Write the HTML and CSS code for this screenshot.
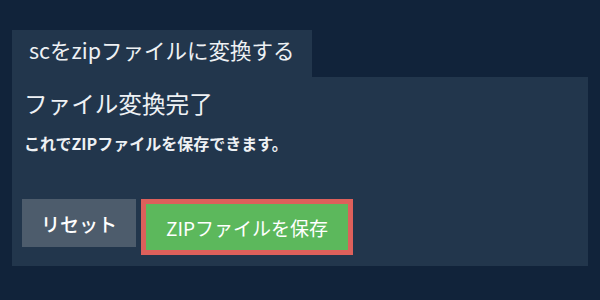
FILE: index.html
```html
<!DOCTYPE html>
<html lang="ja">
<head>
<meta charset="utf-8">
<link rel="stylesheet" href="styles.css">
</head>
<body>
<div class="wrap">
  <div class="tab">scをzipファイルに変換する</div>
  <div class="panel">
    <h2 class="title">ファイル変換完了</h2>
    <p class="msg">これでZIPファイルを保存できます。</p>
    <div class="actions">
      <button class="btn reset">リセット</button>
      <button class="btn save">ZIPファイルを保存</button>
    </div>
  </div>
</div>
</body>
</html>
```

FILE: styles.css
```css
html, body {
  margin: 0;
  padding: 0;
  background: #11233a;
  width: 600px;
  height: 300px;
  overflow: hidden;
  font-family: "Noto Sans CJK JP", "Noto Sans", sans-serif;
  color: #ffffff;
}
.wrap {
  padding: 30px 12px 0 12px;
}
.tab {
  display: inline-block;
  background: #22364c;
  height: 47px;
  line-height: 40px;
  padding: 0 18px 0 17px;
  font-size: 21.5px;
  color: #eef1f4;
  box-sizing: border-box;
}
.panel {
  background: #22364c;
  height: 189px;
  padding: 12px 10px 0 12px;
  box-sizing: border-box;
}
.title {
  margin: 0;
  font-size: 23.6px;
  font-weight: normal;
  line-height: 28px;
  color: #eef1f4;
}
.msg {
  margin: 15px 0 0 0;
  font-size: 16px;
  font-weight: bold;
  line-height: 22px;
  color: #eef1f4;
}
.actions {
  display: flex;
  align-items: flex-start;
  gap: 5px;
  margin: 45px 0 0 -2px;
}
.btn {
  font-family: inherit;
  color: #ffffff;
  border: none;
  margin: 0;
  cursor: pointer;
  font-size: 19px;
}
.reset {
  background: #4d5c6c;
  width: 114px;
  height: 48px;
  padding: 0;
  font-weight: 500;
}
.save {
  background: #5cb85c;
  border: 5px solid #dd605b;
  width: 212px;
  height: 56px;
  padding: 0;
  box-sizing: border-box;
}
```
